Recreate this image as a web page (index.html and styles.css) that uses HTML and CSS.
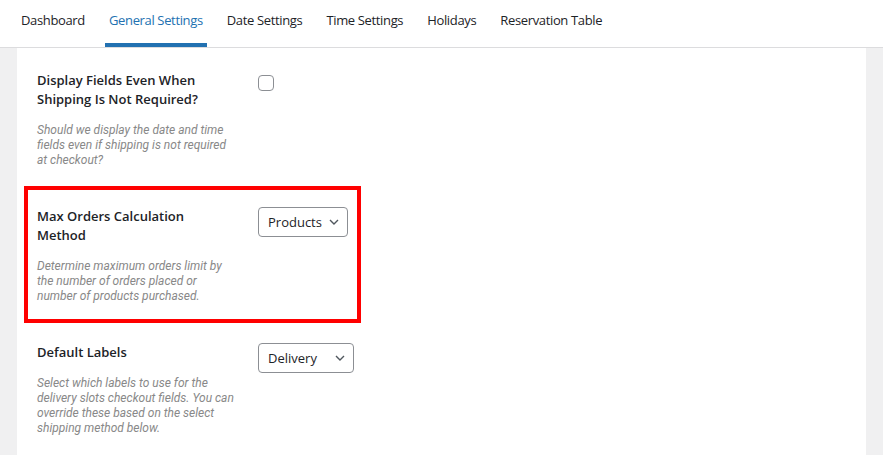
FILE: index.html
```html
<!DOCTYPE html>
<html lang="en">
  <head>
    <meta charset="UTF-8" />
    <meta name="viewport" content="width=device-width, initial-scale=1.0" />
    <title>General Settings</title>
    <link rel="stylesheet" href="styles.css">
  </head>
  <body>
    <nav class="tabs">
      <a href="#" class="tab">Dashboard</a>
      <a href="#" class="tab active">General Settings</a>
      <a href="#" class="tab">Date Settings</a>
      <a href="#" class="tab">Time Settings</a>
      <a href="#" class="tab">Holidays</a>
      <a href="#" class="tab">Reservation Table</a>
    </nav>

    <div class="panel">
      <div class="row">
        <div class="label">
          <h3>Display Fields Even When Shipping Is Not Required?</h3>
          <p class="desc">Should we display the date and time<br>fields even if shipping is not required<br>at checkout?</p>
        </div>
        <div class="field">
          <input type="checkbox" class="check" />
        </div>
      </div>

      <div class="row marked">
        <div class="label">
          <h3>Max Orders Calculation Method</h3>
          <p class="desc">Determine maximum orders limit by<br>the number of orders placed or<br>number of products purchased.</p>
        </div>
        <div class="field">
          <div class="select">
            <span>Products</span>
            <svg width="10" height="6" viewBox="0 0 10 6"><path d="M1 1l4 4 4-4" fill="none" stroke="#50575e" stroke-width="1.4"/></svg>
          </div>
        </div>
      </div>

      <div class="row">
        <div class="label">
          <h3>Default Labels</h3>
          <p class="desc">Select which labels to use for the<br>delivery slots checkout fields. You can<br>override these based on the select<br>shipping method below.</p>
        </div>
        <div class="field">
          <div class="select select-labels">
            <span>Delivery</span>
            <svg width="10" height="6" viewBox="0 0 10 6"><path d="M1 1l4 4 4-4" fill="none" stroke="#50575e" stroke-width="1.4"/></svg>
          </div>
        </div>
      </div>
    </div>
  </body>
</html>
```

FILE: styles.css
```css
body {
  margin: 0;
  height: 100vh;
  display: flex;
  flex-direction: column;
  background-color: #f0f0f1;
  font-family: "Open Sans", "Noto Sans", sans-serif;
  color: #1d2327;
}

.tabs {
  display: flex;
  gap: 16px;
  height: 47px;
  padding-left: 17px;
  background-color: #fff;
  border-bottom: 1px solid #dcdcde;
}

.tab {
  display: flex;
  align-items: center;
  padding: 0 4px 4px;
  font-size: 13px;
  letter-spacing: -0.35px;
  color: #1d2327;
  text-decoration: none;
  border-bottom: 4px solid transparent;
}

.tab.active {
  color: #2271b1;
  border-bottom-color: #2271b1;
  border-radius: 4px 4px 0 0;
}

.panel {
  flex: 1;
  margin: 0 17px;
  padding: 15px 20px 0;
  background-color: #fff;
  display: flex;
  flex-direction: column;
  align-items: flex-start;
  gap: 25px;
}

.row {
  display: grid;
  grid-template-columns: 200px auto;
  column-gap: 21px;
  padding: 8px 0 6px;
}

.row.marked {
  outline: 4px solid #f00;
  outline-offset: 9px;
}

.label h3 {
  max-width: 190px;
  margin: 0;
  font-size: 13px;
  font-weight: 600;
  line-height: 19px;
}

.desc {
  margin: 14px 0 0;
  font-family: Roboto, "Open Sans", sans-serif;
  font-size: 12px;
  font-style: italic;
  line-height: 15px;
  color: #888;
  white-space: nowrap;
}

.check {
  appearance: none;
  margin: 4px 0 0;
  width: 16px;
  height: 16px;
  border: 1px solid #8c8f94;
  border-radius: 4px;
  background-color: #fff;
}

.select {
  display: flex;
  align-items: center;
  justify-content: space-between;
  gap: 7px;
  height: 30px;
  box-sizing: border-box;
  padding: 0 8px 0 9px;
  border: 1px solid #8c8f94;
  border-radius: 4px;
  font-size: 13px;
}

.select-labels {
  width: 96px;
}
```
